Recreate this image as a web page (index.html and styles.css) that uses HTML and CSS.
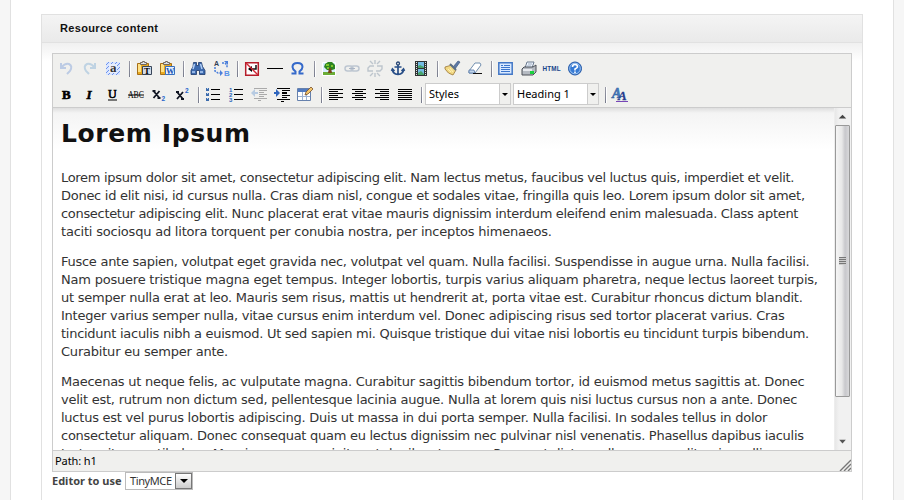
FILE: index.html
```html
<!DOCTYPE html>
<html lang="en">
<head>
<meta charset="utf-8">
<title>Resource content</title>
<link rel="stylesheet" href="styles.css">
</head>
<body>
<div class="page">
<section class="panel">
<h2 class="panel-title">Resource content</h2>
<div class="panel-body">
<div class="editor">
<div class="toolbar">
<div class="row">
<svg class="ic" viewBox="0 0 20 20"><path d="M5 5v5h5M5.500 9.500Q9 5 13 6q4 2 1 7l-3 3" fill="none" stroke="#bccbe4" stroke-width="2"/></svg>
<svg class="ic" viewBox="0 0 20 20"><path d="M16 5v5h-5M15.500 9.500Q12 5 8 6q-4 2-1 7l3 3" fill="none" stroke="#bfd3e3" stroke-width="2"/></svg>
<svg class="ic" viewBox="0 0 20 20"><path fill="#d9e5ff" d="M4 4h14v13H4z"/><path d="M4 7l3-3M4 11l7-7M4 15l11-11M6 17L18 5M10 17l8-8M14 17l4-4" stroke="#6e93ec"/><path fill="#e8eefc" d="M7 6h8v9H7z"/><text x="8" y="14" class="g-serif" font-size="13" fill="#333">a</text></svg>
<i class="sep"></i>
<svg class="ic" viewBox="0 0 20 20"><path fill="#e9a91f" stroke="#a66f18" d="M4.500 5.500h11v11h-11z"/><path fill="#ffe287" d="M5 6h3v8H5z"/><path fill="#dce3ea" stroke="#75675a" d="M7.500 6.500V4.500h2v-1h2v1h2v2z"/><path fill="#d3dce9" stroke="#39465a" d="M9.500 8.500h9v8h-9z"/><text x="11" y="15.500" class="g-serif" font-size="9">T</text></svg>
<svg class="ic" viewBox="0 0 20 20"><path fill="#e9a91f" stroke="#a66f18" d="M4.500 5.500h11v11h-11z"/><path fill="#ffe287" d="M5 6h3v8H5z"/><path fill="#dce3ea" stroke="#75675a" d="M7.500 6.500V4.500h2v-1h2v1h2v2z"/><path fill="#e7f1ff" stroke="#3970bd" d="M9.500 8.500h9v8h-9z"/><text x="10" y="15.500" class="g-serif blue" font-size="8.500">W</text></svg>
<i class="sep"></i>
<svg class="ic" viewBox="0 0 20 20"><path fill="#3d6aae" stroke="#1d3969" stroke-width=".8" d="M6.500 4.500h3v3h2v-3h3l1 4 2.500 4v4h-5.500v-4h-3v4H4v-4l2-4z"/><path d="M5 14h3M13 14h3M7.500 6l-1.500 5M13.500 6l1.500 5" stroke="#b3d0f7" stroke-width="1.500"/></svg>
<svg class="ic" viewBox="0 0 20 20"><text x="4" y="8" class="g-sans" font-size="7" fill="#333f58">A</text><text x="14" y="17.500" class="g-sans" font-size="8" fill="#5790e8">B</text><path d="M5 9v4l3 2h4M12 5h3l2 2v3" fill="none" stroke="#4b7fda" stroke-width="1.500" stroke-dasharray="2 1"/><path fill="#4b7fda" d="M10 12l3 3-3 3zM14 3h4v4z"/></svg>
<i class="sep"></i>
<svg class="ic" viewBox="0 0 20 20"><path fill="#fff" stroke="#b51d2a" stroke-width="1.500" d="M4.700 4.700h12.600v12.600H4.700z"/><path d="M9 11h6V7M8 11h3" stroke="#111" stroke-width="1.500" fill="none"/><path d="M7 11l4-3v6z"/><path d="M5 5l12 12" stroke="#cf2634" stroke-width="1.500"/></svg>
<svg class="ic" viewBox="0 0 20 20"><path fill="#000" d="M3 10h16v1H3z"/></svg>
<svg class="ic" viewBox="0 0 20 20"><path d="M4.500 15.500h4v-2Q5.500 11 5.500 9q0-4 5-4t5 4q0 2-3 4.500v2h4" fill="none" stroke="#3469ca" stroke-width="2"/></svg>
<i class="sep"></i>
<svg class="ic" viewBox="0 0 20 20"><path fill="#d7edff" stroke="#fff" d="M4.500 4.500h13v13h-13z"/><path fill="#6bac37" d="M5 14h12v3H5z"/><path fill="#2d8420" d="M7 6l3-2h4l3 3v4l-3 1H9l-3-3z"/><path d="M8 7h3M13 8h2M9 10h2" stroke="#9bdd31" stroke-width="1.500"/><path fill="#754319" d="M11 10h2l1 5h-4z"/></svg>
<svg class="ic" viewBox="0 0 20 20"><rect x="4" y="8" width="8" height="5" rx="2.500" fill="none" stroke="#bdc6d1" stroke-width="1.500"/><rect x="10" y="8" width="8" height="5" rx="2.500" fill="none" stroke="#bdc6d1" stroke-width="1.500"/><path d="M8 10.500h6" stroke="#aab4c4"/></svg>
<svg class="ic" viewBox="0 0 20 20"><path d="M10 8H6L4 10v3h5M12 13h4l2-2V8h-5M6 3l3 3M11 2v4M16 3l-3 3M6 18l3-3M11 19v-4M16 18l-3-3" fill="none" stroke="#bdc5cd" stroke-width="1.400"/></svg>
<svg class="ic" viewBox="0 0 20 20"><circle cx="11" cy="5.500" r="1.500" fill="none" stroke="#294775" stroke-width="1.300"/><path d="M11 7v9M7.500 9h7M5.500 11q0 5 5.500 5.500 5.500-.5 5.500-5.500M4.500 13l1-2 2 2M14.500 13l2-2 1 2" fill="none" stroke="#294f88" stroke-width="1.700"/></svg>
<svg class="ic" viewBox="0 0 20 20"><path fill="#303435" d="M5 3h12v15H5z"/><path fill="#74bce4" d="M8 4h6v6H8zM8 11h6v6H8z"/><path fill="#48a46b" d="M8 8l2-1 4 2v1H8zM8 15l3-2 3 3v1H8z"/><path d="M6.500 4v14M15.500 4v14" stroke="#e2e5df" stroke-width="1" stroke-dasharray="1 1"/></svg>
<i class="sep"></i>
<svg class="ic" viewBox="0 0 20 20"><path d="M12 9l5-6 2 1-5 7z" fill="#5d79a7" stroke="#314d78" stroke-width=".6"/><path fill="#f2d985" stroke="#997536" stroke-width=".8" d="M4 9l7-2 4 5-3 5q-5-1-8-6z"/><path d="M9 6l6 6" stroke="#5b6f88" stroke-width="2"/><path d="M7 11l3 3M9 10l3 4" stroke="#fff2b5"/></svg>
<svg class="ic" viewBox="0 0 20 20"><path d="M5 13l6-8h5l1 2-6 8H5z" fill="#fff" stroke="#718faf"/><path d="M5 12h5l1 3H5z" fill="#c1d5eb" stroke="#486c9d" stroke-width=".7"/><path d="M9 15.500h9" stroke="#111"/></svg>
<i class="sep"></i>
<svg class="ic" viewBox="0 0 20 20"><path fill="#d9e9ff" stroke="#4377c6" stroke-width="1.500" d="M3.800 4.800h13.400v11.400H3.800z"/><path fill="#3c75cc" d="M6 7h2v1H6zm3 0h6v1H9zM6 9h9v1H6zm0 2h9v1H6zm0 2h9v1H6z"/></svg>
<svg class="ic" viewBox="0 0 20 20"><path fill="#eef5ff" stroke="#6b7a8e" d="M7 10l2-6h7l-2 6z"/><path fill="#b5bac2" stroke="#4c5158" d="M4 11l2-2h9l3-2v7l-3 3H4z"/><path fill="#e8eaef" d="M5 11h9v2H5z"/><path fill="#19d13d" d="M12 13h4v3h-4z"/><path d="M10 6h4M9 8h4" stroke="#8192a7" stroke-width=".7"/></svg>
<svg class="ic" viewBox="0 0 20 20"><text x="1.500" y="13" class="g-sans" font-size="6.300" fill="#16458a" textLength="18">HTML</text></svg>
<svg class="ic" viewBox="0 0 20 20"><circle cx="11" cy="10.500" r="6.500" fill="#367ad4" stroke="#2457a5"/><circle cx="11" cy="10.500" r="5.300" fill="none" stroke="#b9d7f7" stroke-width=".8"/><path d="M8.500 9q0-2.500 2.500-2.500T13.500 9Q13 10 11 11v1.500M11 13.500v1.500" fill="none" stroke="#fff" stroke-width="1.600"/></svg>
</div>
<div class="row">
<svg class="ic" viewBox="0 0 20 20"><text x="6" y="15" class="g-serif" font-size="13" stroke="#000" stroke-width=".6">B</text></svg>
<svg class="ic" viewBox="0 0 20 20"><text x="7.500" y="15" class="g-serif it" font-size="13" stroke="#000" stroke-width=".5">I</text></svg>
<svg class="ic" viewBox="0 0 20 20"><text x="6" y="14" class="g-serif thin" font-size="12" stroke="#000" stroke-width=".6">U</text><path fill="#000" d="M6 15.500h9v1H6z"/></svg>
<svg class="ic" viewBox="0 0 20 20"><text x="3" y="14" class="g-serif thin" font-size="9.500" textLength="16" lengthAdjust="spacingAndGlyphs">ABC</text><path fill="#000" d="M3 10.500h16v1H3z"/></svg>
<svg class="ic" viewBox="0 0 20 20"><path d="M5.500 7l6 7M11.500 7l-6 7M4.500 7h3M9.500 14h3" stroke="#101522" stroke-width="1.800"/><text x="13.500" y="17" class="g-sans" font-size="6.500" fill="#2765cb">2</text></svg>
<svg class="ic" viewBox="0 0 20 20"><path d="M6 8l6 7M12 8l-6 7M5 8h3M10 15h3" stroke="#101522" stroke-width="1.800"/><text x="14" y="9" class="g-sans" font-size="6.500" fill="#2765cb">2</text></svg>
<i class="sep"></i>
<svg class="ic" viewBox="0 0 20 20"><path fill="#000" d="M9 5h9v1H9zm0 5h9v1H9zm0 5h9v1H9z"/><path fill="#3e6dad" d="M4 4h3v3H4zm0 5h3v3H4zm0 5h3v3H4z"/><path fill="#bdd3ec" d="M5 4h1v1H5zm0 5h1v1H5zm0 5h1v1H5z"/></svg>
<svg class="ic" viewBox="0 0 20 20"><path fill="#000" d="M9 5h9v1H9zm0 5h9v1H9zm0 5h9v1H9z"/><g class="g-sans" font-size="6" fill="#2965b9"><text x="4" y="8">1</text><text x="4" y="13">2</text><text x="4" y="18">3</text></g></svg>
<svg class="ic" viewBox="0 0 20 20"><path fill="#aaa" d="M6 4h13v1H6zm5 2h8v1h-8zm0 2h5v1h-5zm0 2h8v1h-8zm0 2h5v1h-5zM6 14h13v1H6zm4 2h3v1h-3z"/><path fill="#b7cbe2" d="M3 9l4-4v3h3v2H7v3z"/></svg>
<svg class="ic" viewBox="0 0 20 20"><path fill="#000" d="M6 4h13v1H6zm5 2h8v1h-8zm0 2h5v2h-5zm0 3h8v1h-8zm0 2h5v1h-5zM6 15h13v1H6zm4 2h3v1h-3z"/><path fill="#2f65bd" d="M9 9L5 5v3H3v2h2v3z"/></svg>
<svg class="ic" viewBox="0 0 20 20"><path fill="#fff" stroke="#6681ad" d="M3.500 4.500h13v12h-13z"/><path fill="#527bc0" d="M4 5h12v3H4z"/><path d="M4 12.500h12M8.500 8v8M12.500 8v8" stroke="#9db2d2"/><path d="M11 11l1-3 5-5 2 2-5 5z" fill="#f2c56c" stroke="#79512c" stroke-width=".8"/></svg>
<i class="sep"></i>
<svg class="ic" viewBox="0 0 20 20"><path fill="#000" d="M4 5h14v1H4zm0 2h9v1H4zm0 2h14v1H4zm0 2h9v1H4zm0 2h14v1H4zm0 2h9v1H4z"/></svg>
<svg class="ic" viewBox="0 0 20 20"><path fill="#000" d="M4 5h14v1H4zm3 2h8v1H7zM4 9h14v1H4zm3 2h8v1H7zm-3 2h14v1H4zm3 2h8v1H7z"/></svg>
<svg class="ic" viewBox="0 0 20 20"><path fill="#000" d="M4 5h14v1H4zm5 2h9v1H9zM4 9h14v1H4zm5 2h9v1H9zm-5 2h14v1H4zm5 2h9v1H9z"/></svg>
<svg class="ic" viewBox="0 0 20 20"><path fill="#000" d="M4 5h14v1H4zm0 2h14v1H4zm0 2h14v1H4zm0 2h14v1H4zm0 2h14v1H4zm0 2h14v1H4z"/></svg>
<i class="sep"></i>
<div class="select"><span>Styles</span><b></b></div>
<div class="select"><span>Heading 1</span><b></b></div>
<i class="sep last"></i>
<svg class="ic" viewBox="0 0 20 20"><text x="3" y="14" class="g-serif it" font-size="14" fill="#467fc0" stroke="#315c9e" stroke-width=".5">A</text><text x="9" y="16" class="g-serif it" font-size="13" fill="#263c8d" stroke="#263c8d" stroke-width=".3">A</text><path fill="#7846b7" d="M7 17h12v1H7z"/></svg>
</div>
</div>
<div class="content">
<div class="doc">
<h1>Lorem Ipsum</h1>
<p><span class="tight">Lorem ipsum dolor sit amet, consectetur adipiscing elit. Nam lectus metus, faucibus vel luctus quis, imperdiet et velit.</span><br><span class="snug">Donec id elit nisi, id cursus nulla. Cras diam nisl, congue et sodales vitae, fringilla quis leo. Lorem ipsum dolor sit amet,</span><br><span class="tight">consectetur adipiscing elit. Nunc placerat erat vitae mauris dignissim interdum eleifend enim malesuada. Class aptent</span><br><span class="loose">taciti sociosqu ad litora torquent per conubia nostra, per inceptos himenaeos.</span></p>
<p><span class="snug">Fusce ante sapien, volutpat eget gravida nec, volutpat vel quam. Nulla facilisi. Suspendisse in augue urna. Nulla facilisi.</span><br><span class="loose">Nam posuere tristique magna eget tempus. Integer lobortis, turpis varius aliquam pharetra, neque lectus laoreet turpis,</span><br>ut semper nulla erat at leo. Mauris sem risus, mattis ut hendrerit at, porta vitae est. Curabitur rhoncus dictum blandit.<br>Integer varius semper nulla, vitae cursus enim interdum vel. Donec adipiscing risus sed tortor placerat varius. Cras<br><span class="snug">tincidunt iaculis nibh a euismod. Ut sed sapien mi. Quisque tristique dui vitae nisi lobortis eu tincidunt turpis bibendum.</span><br><span class="loose">Curabitur eu semper ante.</span></p>
<p>Maecenas ut neque felis, ac vulputate magna. Curabitur sagittis bibendum tortor, id euismod metus sagittis at. Donec<br>velit est, rutrum non dictum sed, pellentesque lacinia augue. Nulla at lorem quis nisi luctus cursus non a ante. Donec<br>luctus est vel purus lobortis adipiscing. Duis ut massa in dui porta semper. Nulla facilisi. In sodales tellus in dolor<br><span class="snug">consectetur aliquam. Donec consequat quam eu lectus dignissim nec pulvinar nisl venenatis. Phasellus dapibus iaculis</span><br>tortor vitae vestibulum. Mauris cursus suscipit erat dapibus tempus. Praesent dictum ullamcorper elit quis mollis.</p>
</div>
<div class="scroll">
<svg class="arrow" viewBox="0 0 16 16"><path fill="#444" d="M4 10l4-4 4 4z"/></svg>
<div class="thumb"><div class="grip"></div></div>
<svg class="arrow down" viewBox="0 0 16 16"><path fill="#555" d="M4.500 6h7L8 10z"/></svg>
</div>
</div>
<div class="status"><span>Path: h1</span><svg viewBox="0 0 12 12"><path d="M1 12L12 1M5 12l7-7M9 12l3-3" stroke="#777" stroke-width="1.400"/></svg></div>
</div>
<div class="chooser"><strong>Editor to use</strong><div class="pick"><span>TinyMCE</span><b></b></div></div>
</div>
</section>
</div>
</body>
</html>
```
FILE: styles.css
```css
* { box-sizing: border-box; }
body { margin: 0; height: 500px; overflow: hidden; background: #f6f6f6; font-family: "DejaVu Sans", Verdana, sans-serif; color: #333; }
.page { width: 884px; height: 500px; margin-left: 10px; padding: 14px 30px 0; background: #fff; border: solid #e1e1e1; border-width: 0 1px; }
.panel { width: 822px; height: 500px; border: 1px solid #e1e1e1; }
.panel-title { margin: 0; height: 28px; padding-left: 18px; border-bottom: 1px solid #e1e1e1; background: linear-gradient(#f4f4f4, #eaeaea); font: bold 11px/26px "Liberation Sans", sans-serif; letter-spacing: .33px; color: #111; }
.panel-body { padding: 10px 10px 0; background: linear-gradient(#f0f0f0, #fff 18px); }
.editor { width: 800px; height: 419px; border: 1px solid #ccc; display: flex; flex-direction: column; }
.toolbar { height: 53px; padding: 3px 0 0 2px; background: #f0f0ee; }
.row { display: flex; height: 26px; }
.ic { flex: none; width: 20px; height: 20px; margin: 1px 2px 0 1px; overflow: visible; }
.sep { flex: none; width: 1px; height: 16px; margin: 4px 2px 0 5px; background: linear-gradient(#9899a5, #777b8c); box-shadow: 1px 0 #fff; }
.sep.last { margin-left: 5px; }
.g-serif { font-family: "Liberation Serif", serif; font-weight: bold; }
.g-sans { font-family: "Liberation Sans", sans-serif; font-weight: bold; }
.it { font-style: italic; }
.thin { font-weight: normal; }
.blue { fill: #2055b3; }
.select { display: flex; width: 86px; height: 22px; margin: 0 1px; background: #fff; border: 1px solid #ccc; font: 11px/20px "Noto Sans", sans-serif; color: #000; }
.select span { flex: 1; padding-left: 3px; }
.select b { width: 11px; background: #f0f0ee; border-left: 1px solid #ccc; display: grid; place-items: center; }
.select b::after { content: ""; border: 3px solid transparent; border-top-color: #000; border-bottom: 0; }
.content { display: flex; height: 344px; border-top: 1px solid #ccc; overflow: hidden; background: linear-gradient(#dedede, #f4f4f4 5px, #fff 42px); }
.doc { flex: 1; min-width: 0; padding-left: 8px; white-space: nowrap; font-size: 13px; line-height: 18px; letter-spacing: -.24px; }
.doc h1 { margin: 10px 0 19px; font-size: 25px; line-height: 32px; letter-spacing: .6px; color: #111; }
.doc p { margin: 0 0 12px; }
.tight { letter-spacing: -.31px; }
.snug { letter-spacing: -.27px; }
.loose { letter-spacing: -.21px; }
.scroll { width: 17px; display: flex; flex-direction: column; padding-right: 1px; background: linear-gradient(90deg, #e7e7e7, #f1f1f1 4px); border-left: 1px solid #ededed; }
.arrow { width: 15px; height: 17px; }
.down { margin-top: auto; }
.thumb { height: 272px; border: 1px solid #999; border-radius: 1px; background: linear-gradient(90deg, #f5f5f5, #e8e8e8 45%, #c8c8cc 70%, #d8d8da); display: grid; place-items: center; }
.grip { width: 7px; height: 8px; background: repeating-linear-gradient(#777 0 1px, #ccc 1px 2px); }
.status { height: 21px; padding-left: 2px; border-top: 1px solid #ccc; background: #f0f0ee; display: flex; justify-content: space-between; font: 11px/19px "Noto Sans", sans-serif; letter-spacing: -.1px; color: #000; }
.status svg { width: 12px; height: 12px; margin-top: 8px; }
.chooser { display: flex; font-size: 11px; line-height: 18px; }
.chooser strong { width: 73px; font-family: "Noto Sans", sans-serif; color: #444; }
.pick { display: flex; width: 68px; height: 18px; border: 1px solid #bbb; background: #fff; font: 11px/16px "Noto Sans", sans-serif; letter-spacing: -.4px; }
.pick span { flex: 1; padding-left: 4px; }
.pick b { width: 17px; border: 1px solid #777; background: linear-gradient(#fff, #ccc); display: grid; place-items: center; }
.pick b::after { content: ""; border: 4px solid transparent; border-top-color: #000; border-bottom: 0; }
```
